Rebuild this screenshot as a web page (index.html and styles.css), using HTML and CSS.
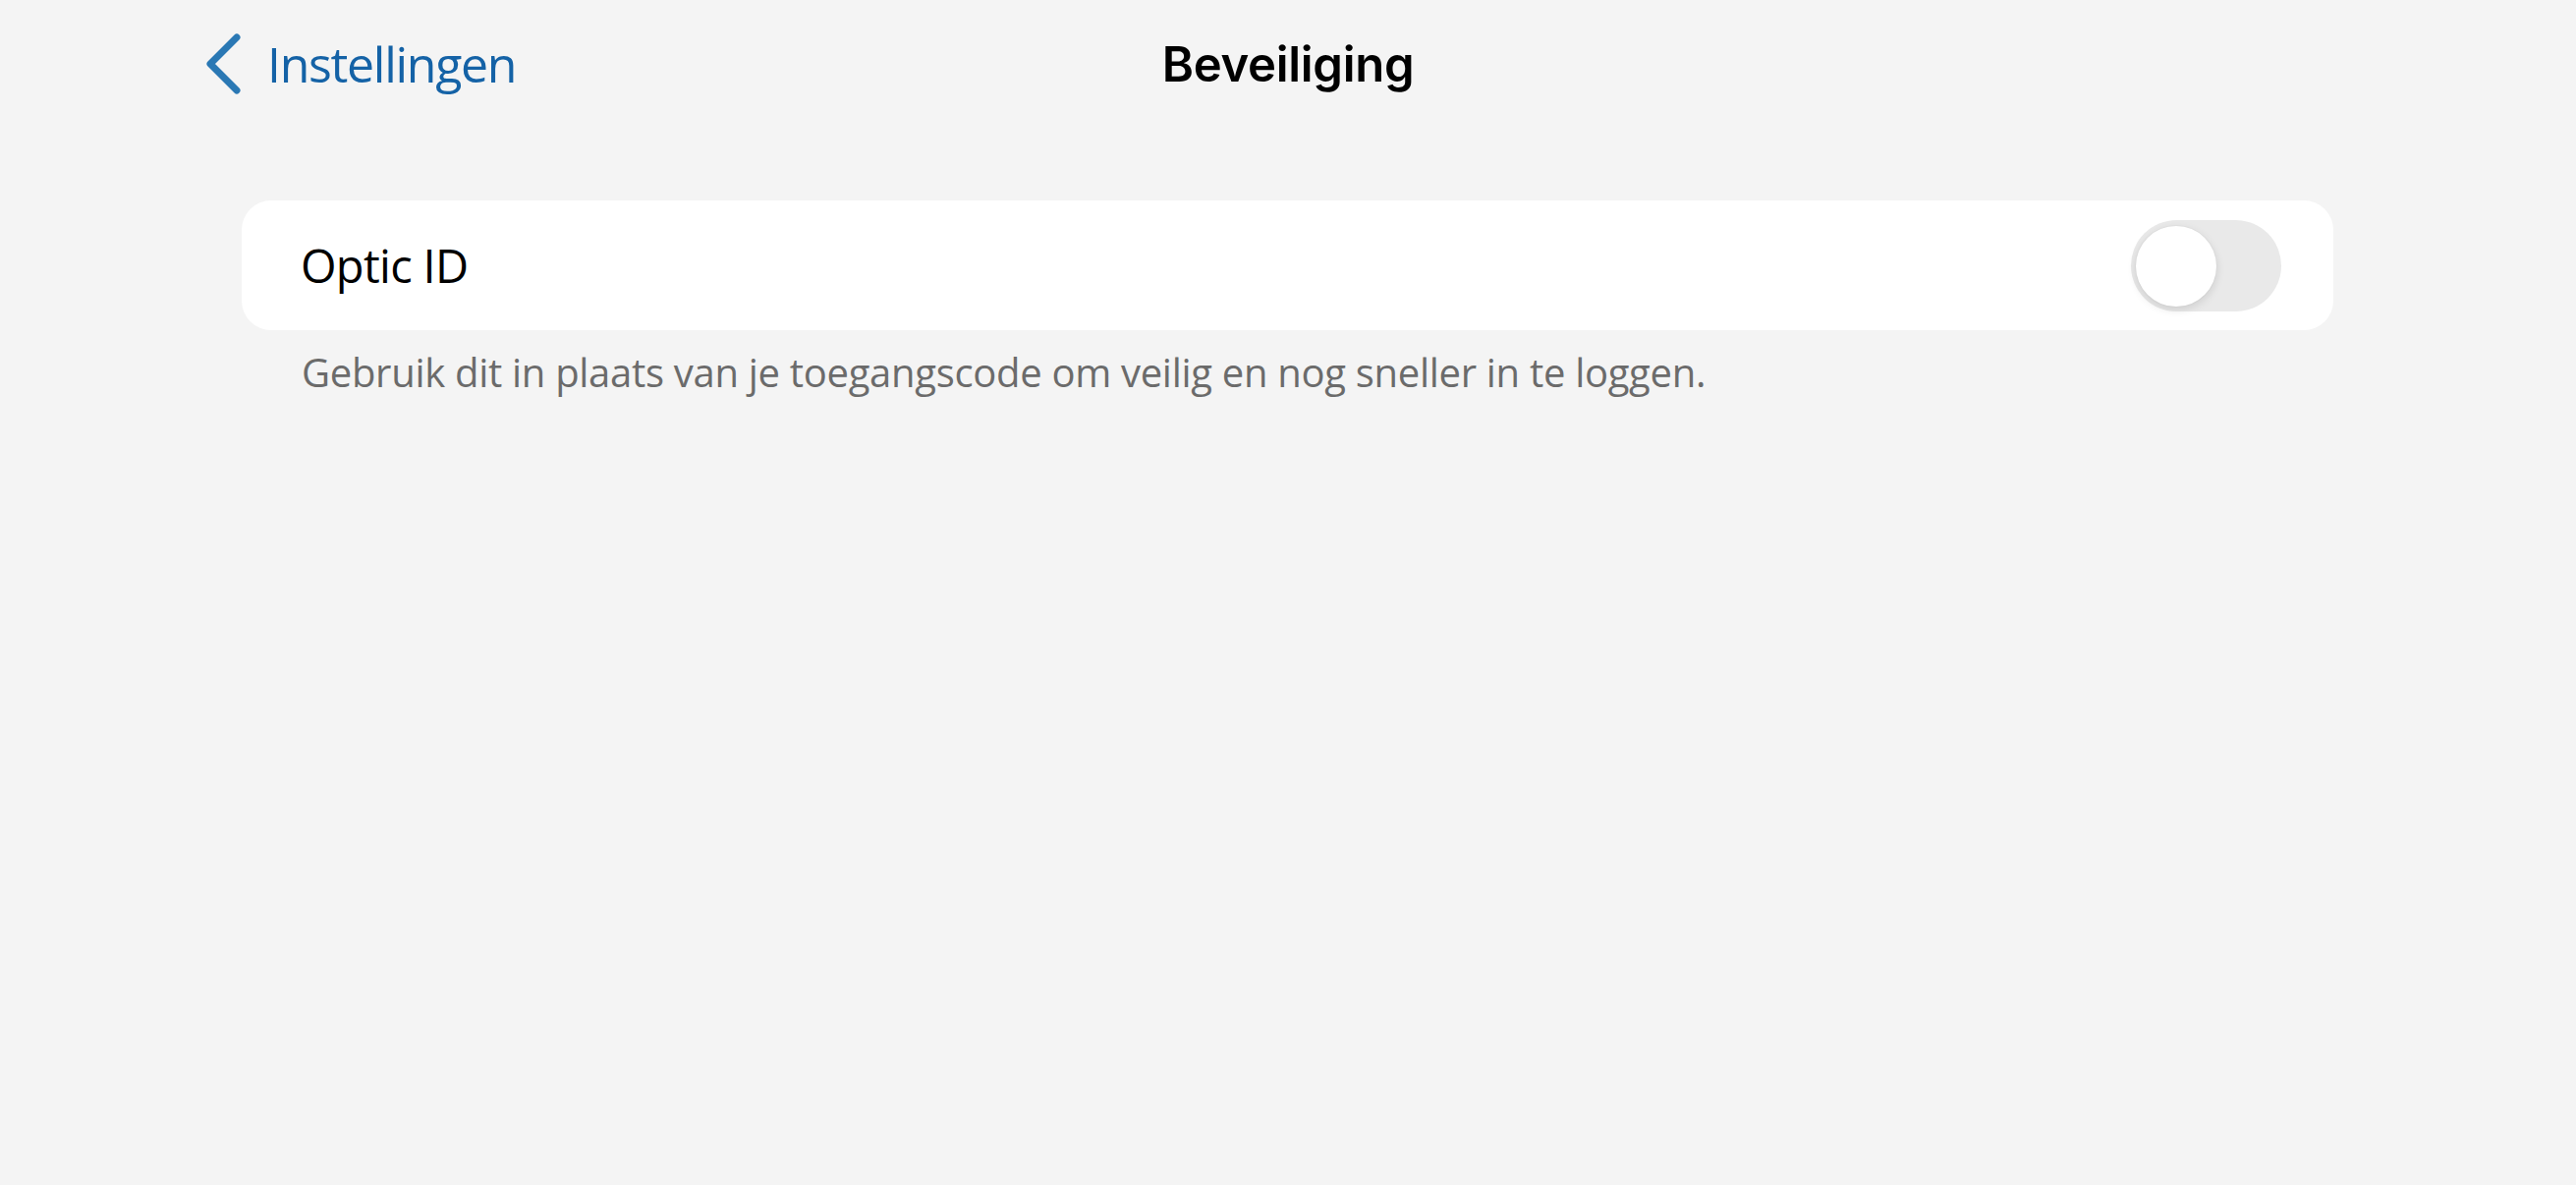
FILE: index.html
```html
<!DOCTYPE html>
<html lang="nl">
<head>
<meta charset="utf-8">
<title>Beveiliging</title>
<link rel="stylesheet" href="styles.css">
</head>
<body>
<header class="navbar">
  <a class="back" href="#">
    <svg class="chevron" width="38" height="62" viewBox="0 0 38 62" aria-hidden="true">
      <path d="M33 4 L6 31 L33 58" fill="none" stroke="#2a78b4" stroke-width="7" stroke-linecap="round" stroke-linejoin="round"/>
    </svg>
    <span class="back-label">Instellingen</span>
  </a>
  <h1 class="title">Beveiliging</h1>
  <div class="spacer"></div>
</header>
<main class="content">
  <section class="group">
    <div class="row">
      <span class="row-label">Optic ID</span>
      <span class="switch" role="switch" aria-checked="false"><span class="knob"></span></span>
    </div>
  </section>
  <p class="footnote">Gebruik dit in plaats van je toegangscode om veilig en nog sneller in te loggen.</p>
</main>
</body>
</html>
```
FILE: styles.css
```css
html, body {
  margin: 0;
  padding: 0;
}
body {
  background: #f4f4f4;
  width: 2622px;
  height: 1206px;
  overflow: hidden;
  font-family: "Open Sans", "Noto Sans", sans-serif;
}
.navbar {
  display: grid;
  grid-template-columns: 1fr auto 1fr;
  align-items: center;
  height: 132px;
  padding: 0 208px;
  box-sizing: border-box;
  margin-top: -1px;
}
.back {
  display: flex;
  align-items: center;
  gap: 26px;
  text-decoration: none;
  color: #1462a6;
  justify-self: start;
}
.chevron {
  display: block;
}
.back-label {
  font-size: 50px;
  letter-spacing: -1.3px;
  line-height: 1;
}
.title {
  margin: 0;
  font-family: "Inter", "Liberation Sans", sans-serif;
  font-weight: 600;
  font-size: 49px;
  color: #000;
  letter-spacing: -0.3px;
}
.content {
  padding: 73px 247px 0 246px;
}
.group {
  background: #fff;
  border-radius: 30px;
}
.row {
  display: flex;
  align-items: center;
  justify-content: space-between;
  height: 132px;
  padding: 0 53px 0 60px;
}
.row-label {
  font-size: 47px;
  color: #000;
  letter-spacing: -0.7px;
}
.switch {
  position: relative;
  width: 153px;
  height: 93px;
  border-radius: 47px;
  background: #e9e9e9;
}
.knob {
  position: absolute;
  left: 5px;
  top: 6px;
  width: 82px;
  height: 82px;
  border-radius: 50%;
  background: #fff;
  box-shadow: 0 3px 10px rgba(0,0,0,0.12), 0 0 0 1px rgba(0,0,0,0.02);
}
.footnote {
  margin: 15px 0 0 61px;
  font-size: 40px;
  color: #6b6b6b;
  letter-spacing: -0.3px;
}
```
